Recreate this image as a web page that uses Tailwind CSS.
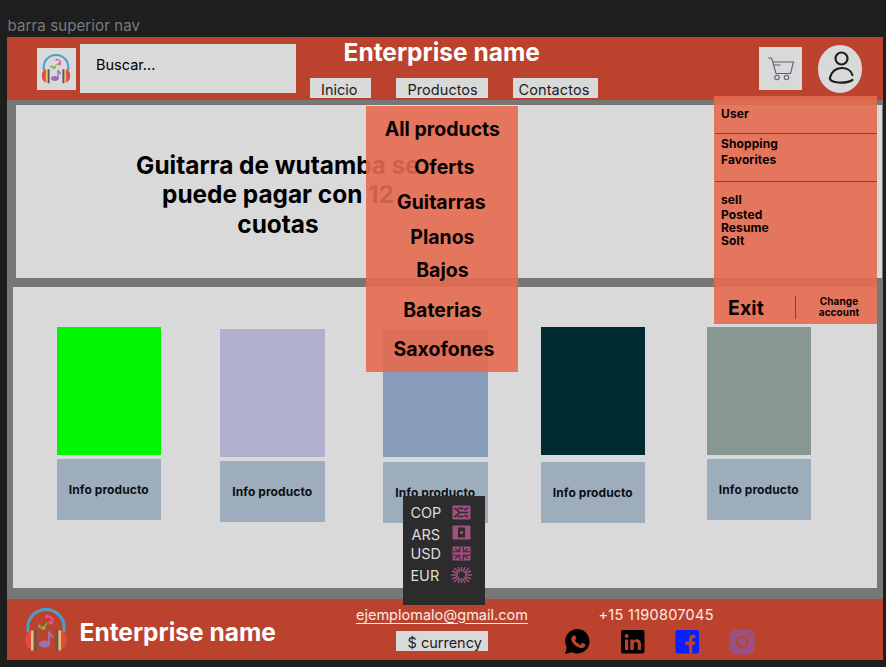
<!DOCTYPE html>
<html lang="es">
<head>
<meta charset="utf-8">
<title>Enterprise name</title>
<script src="https://cdn.jsdelivr.net/npm/@tailwindcss/browser@4"></script>
</head>
<body class="bg-[#1e1e1e] w-[886px] h-[667px] overflow-hidden font-['Inter',sans-serif] text-black">
<svg width="0" height="0" class="absolute">
  <symbol id="logo" viewBox="0 0 44 44">
    <path d="M4 24V19a18 17.500 0 0 1 36 0v5" fill="none" stroke="#4a9fc8" stroke-width="3"/>
    <path d="M8 22.500C-1 22.500-1 41 8 41.500z" fill="#de4e40"/>
    <path d="M36 22.500c9 0 9 18.500 0 19z" fill="#de4e40"/>
    <path d="M7 22.500h2.800v20H7zM34.200 22.500H37v20h-2.800z" fill="#f2b872"/>
    <path d="M9.800 22.500h2.800v20.300H9.800zM31.400 22.500h2.800v20.300h-2.800z" fill="#5d5a56"/>
    <ellipse cx="20.500" cy="36" rx="5.700" ry="3.600" fill="#9a72b4"/>
    <path d="M25 36V23.500c0 3 3.800 2.500 3.400 6.500" fill="none" stroke="#9a72b4" stroke-width="2"/>
    <path d="M15 18c1.500 3 4.500 3.500 6 .500l2-4" fill="none" stroke="#7cb342" stroke-width="1.500"/>
    <circle cx="15.200" cy="18" r="1.600" fill="#7cb342"/><circle cx="19.500" cy="20" r="2" fill="#7cb342"/>
    <path d="M22.500 8c3 0 5 1.500 6.200 3.500l-1.200 4" fill="none" stroke="#e0529c" stroke-width="1.800"/>
    <circle cx="22.500" cy="8.500" r="1.500" fill="#e0529c"/><circle cx="26.800" cy="14.500" r="2.100" fill="#e0529c"/>
  </symbol>
</svg>
<div class="h-[37px] pl-[7.500px] pt-[18px] text-[15px] leading-4 tracking-[0.12px] text-[#7b7b7b]">barra superior nav</div>

<main class="relative ml-[7px] w-[875.500px] h-[623px] bg-[#777777] flex flex-col">
  <header class="h-[63px] shrink-0 bg-[#bb432e] flex items-start">
    <div class="ml-[30px] mt-[11px] w-[38.500px] h-[42px] bg-[#d9d9d9] flex items-center justify-center">
      <svg class="w-[30px] h-[30px]"><use href="#logo"/></svg>
    </div>
    <div class="ml-[4.500px] mt-[7px] w-[216px] h-[48.500px] bg-[#d9d9d9] pl-[16px] pt-[13px] text-[14.500px] leading-4">Buscar...</div>
    <div class="ml-[13.500px] w-[289px]">
      <h1 class="h-[40.500px] pt-[3px] pl-[34px] text-[24.500px] leading-6 font-bold text-white whitespace-nowrap">Enterprise name</h1>
      <nav class="flex h-[20px] text-[14.500px] leading-[24px] text-[#1c1c1c]">
        <a class="w-[61px] bg-[#d9d9d9] pl-[11.500px]">Inicio</a>
        <a class="ml-[25px] w-[92px] bg-[#d9d9d9] pl-[12px] tracking-[0.050px]">Productos</a>
        <a class="ml-[25.500px] w-[85px] bg-[#d9d9d9] pl-[5.500px] tracking-[0.100px]">Contactos</a>
      </nav>
    </div>
    <div class="ml-[160.500px] mt-[10px] w-[42.500px] h-[43px] bg-[#d9d9d9]">
      <svg viewBox="0 0 42.500 43" fill="none" stroke="#605f78" stroke-width="1.100"><path d="M9 11h3.500l1 3L17 26.500h14.500L34.500 15H14M14 18h7.500"/><circle cx="18" cy="30.500" r="2.200"/><circle cx="27.500" cy="30.500" r="2.200"/></svg>
    </div>
    <div class="ml-[16px] mt-[8px] w-[44.500px] h-[47.500px] rounded-[50%] bg-[#d9d9d9]">
      <svg viewBox="0 0 44.500 47.500" fill="none" stroke="#1c2024" stroke-width="2.200" stroke-linecap="round"><circle cx="23.500" cy="13.500" r="6"/><path d="M34.500 30C31.500 20.500 15.500 20 12 32.500c-1.500 6 16.500 6.500 22.500 2.500"/></svg>
    </div>
  </header>

  <section class="ml-[9px] mt-[5.400px] w-[865.500px] h-[173px] shrink-0 bg-[#d9d9d9] pl-[112px] pt-[45.500px]">
    <p class="w-[300px] text-center text-[24.400px] leading-[29.500px] font-bold">Guitarra de wutamba se puede pagar con 12 cuotas</p>
  </section>

  <section class="ml-[6px] mt-[9px] w-[864px] h-[301px] shrink-0 bg-[#d9d9d9] flex items-start pt-[40px] text-[12px] leading-[61px] font-bold text-center text-[#0b0f14] tracking-[0.090px]">
    <article class="ml-[43.500px] w-[104.500px]"><div class="h-[128px] bg-[#00f500]"></div><div class="mt-[3.500px] h-[61px] bg-[#9eadbc]">Info producto</div></article>
    <article class="ml-[59px] mt-[2px] w-[104.500px]"><div class="h-[128px] bg-[#b0afcd]"></div><div class="mt-[3.500px] h-[61px] bg-[#9eadbc]">Info producto</div></article>
    <article class="ml-[58.500px] mt-[2px] w-[104.500px]"><div class="h-[128px] bg-[#869cb8]"></div><div class="mt-[5px] h-[61px] bg-[#9eadbc]">Info producto</div></article>
    <article class="ml-[53px] w-[104.500px]"><div class="h-[128px] bg-[#002a32]"></div><div class="mt-[7px] h-[61px] bg-[#9eadbc]">Info producto</div></article>
    <article class="ml-[61.500px] w-[104.500px]"><div class="h-[128px] bg-[#879891]"></div><div class="mt-[3.500px] h-[61px] bg-[#9eadbc]">Info producto</div></article>
  </section>

  <footer class="mt-auto h-[61.500px] shrink-0 bg-[#bb432e] flex items-start text-[#fbe9e4]">
    <svg class="ml-[17px] mt-[9px] w-[44px] h-[44px]"><use href="#logo"/></svg>
    <h2 class="ml-[11.500px] mt-[21.500px] w-[276.500px] text-[24.500px] leading-6 font-bold text-white whitespace-nowrap">Enterprise name</h2>
    <div class="w-[242.500px]">
      <a class="block mt-[8px] text-[14.500px] leading-4 underline underline-offset-[3px] whitespace-nowrap">ejemplomalo@gmail.com</a>
      <div class="ml-[40px] mt-[8px] w-[92px] h-[20.500px] bg-[#d9d9d9] pl-[11.500px] text-[14.500px] leading-[24px] text-[#1c1c1c] whitespace-nowrap">$ currency</div>
    </div>
    <div>
      <p class="mt-[8px] text-[14.500px] leading-4 tracking-[0.270px] whitespace-nowrap">+15 1190807045</p>
      <svg class="-ml-[34.500px] mt-[5px]" width="192" height="27" viewBox="0 0 192 27">
        <path d="M1 26l1.800-6.500A12.200 12.200 0 1 1 8 24.300z" fill="#000"/>
        <path d="M8.500 8.500c1.500-2 2.800-1.200 3.300.5.600 1.800.3 2-.7 3.300 1.400 2.500 3 3.600 5.300 4.600l1.500-1.800c.8-.4 3.400 1 3.600 1.500.2 3-3 4-5.200 3.300-4.500-1.300-7-3.700-8.700-7.200-.7-1.600-.6-3.200.9-4.200z" fill="#bb432e"/>
        <rect x="57" y="2" width="23.500" height="23.500" rx="2" fill="#000"/>
        <path d="M61 11.500h3.200V22H61zM66.300 11.500h3.200v1.400c2-2.700 7.500-2.200 7.500 3V22h-3.300v-5.500c0-3.300-4-3.200-4 0V22h-3.400z" fill="#bb432e"/><circle cx="62.600" cy="8" r="1.900" fill="#bb432e"/>
        <rect x="111.500" y="2" width="23.500" height="23.500" rx="2" fill="#0a1fff"/>
        <path d="M125 25.500V17h-3.700v-3.500h3.700v-2.300c0-4 2.700-5 6.200-4.300v3.200c-2-.1-2.900-.1-2.900 1.800v1.600h3.100l-.5 3.500h-2.600v8.500z" fill="#bb432e"/>
        <rect x="165.500" y="1.500" width="25" height="25" rx="6.500" fill="#9a5080"/>
        <circle cx="178" cy="14" r="5.200" fill="none" stroke="#bb432e" stroke-width="2.200"/><circle cx="185.500" cy="6.500" r="1.400" fill="#bb432e"/>
      </svg>
    </div>
  </footer>

  <div class="absolute left-[359.400px] top-[69px] w-[152px] h-[266px] bg-[#e46a50]/90 flex flex-col items-center pt-[10.500px] text-[19.500px] leading-6 font-bold whitespace-nowrap text-[#090100]">
    <span>All products</span>
    <span class="mt-[14.500px] ml-[4px]">Oferts</span>
    <span class="mt-[10.500px] -ml-[2px]">Guitarras</span>
    <span class="mt-[11px]">Planos</span>
    <span class="mt-[9.500px]">Bajos</span>
    <span class="mt-[15.500px]">Baterias</span>
    <span class="mt-[15px] ml-[3px]">Saxofones</span>
  </div>

  <aside class="absolute left-[707px] top-[59px] w-[163px] h-[227.500px] bg-[#e46a50]/90 text-[12px] leading-4 font-bold text-[#090100] tracking-[0.100px]">
    <p class="h-[37.500px] ml-px pl-[6px] pt-[9.500px] border-b border-[#87402f]">User</p>
    <div class="h-[48px] ml-px pl-[6px] pt-[2.500px] border-b border-[#87402f]"><p>Shopping</p><p>Favorites</p></div>
    <div class="h-[114px] pl-[7px] pt-[10.500px]"><p>sell</p><p class="-mt-[1.500px]">Posted</p><p class="-mt-[3px]">Resume</p><p class="-mt-[2.500px]">Solt</p></div>
    <div class="flex">
      <span class="w-[67px] pl-[14px] text-[19.500px] leading-6">Exit</span>
      <span class="ml-[14px] w-px h-[23px] bg-[#87402f]"></span>
      <span class="ml-[14px] w-[58px] text-center text-[10px] leading-[11.500px]">Change account</span>
    </div>
  </aside>

  <div class="absolute left-[396.400px] top-[459px] w-[82px] h-[109px] bg-[#2c2c2c] text-[#dedede] text-[14.500px] leading-4 pl-[7px] pt-[9px]">
    <div class="flex h-[21px]"><span class="w-[42px]">COP</span>
      <svg width="19" height="15" viewBox="0 0 19 15"><rect x=".5" y=".5" width="18" height="14" rx="1" fill="#a04f80"/><path d="M2.500 3l5 4.500L2.500 12M5.500 3.500h6M5.500 11.500h6M8 7.500h8M16 3l-3.500 2M16 12l-3.500-2" fill="none" stroke="#2c2c2c" stroke-width="1.600"/></svg></div>
    <div class="flex h-[20px] pl-px"><span class="w-[41px] pt-px">ARS</span>
      <svg class="-mt-px" width="19" height="15" viewBox="0 0 19 15"><rect x=".5" y=".5" width="18" height="14" rx="1" fill="#a04f80"/><path d="M6 2.500h7v10H6z" fill="#2c2c2c"/><circle cx="9.500" cy="7.500" r="1.600" fill="#a04f80"/></svg></div>
    <div class="flex h-[21px]"><span class="w-[42px]">USD</span>
      <svg width="19" height="15" viewBox="0 0 19 15"><rect x=".5" y=".5" width="18" height="14" rx="1" fill="#a04f80"/><path d="M7.800 1v4.800H1M11.200 1v4.800H18M7.800 14V9.200H1M11.200 14V9.200H18M3 2.500l3.500 2.500M16 2.500L12.500 5M3 12.500L6.500 10M16 12.500L12.500 10" fill="none" stroke="#2c2c2c" stroke-width="1.100"/></svg></div>
    <div class="flex"><span class="w-[41px] pt-px">EUR</span>
      <svg width="21" height="16" viewBox="0 0 21 16"><path d="M14 8h7M14 9.500l6 2.500M13 10.500l5 4.500M12 11.500l2 4.500M10.500 11.500V16M9 11.500L7 16M8 10.500L3 15M7 9.500L1 12M7 8H0M7 6.500L1 4M8 5.500L3 1M9 4.500L7 0M10.500 4.500V0M12 4.500L14 0M13 5.500L18 1M14 6.500L20 4" stroke="#a04f80" stroke-width="1.500"/></svg></div>
  </div>
</main>
</body>
</html>
